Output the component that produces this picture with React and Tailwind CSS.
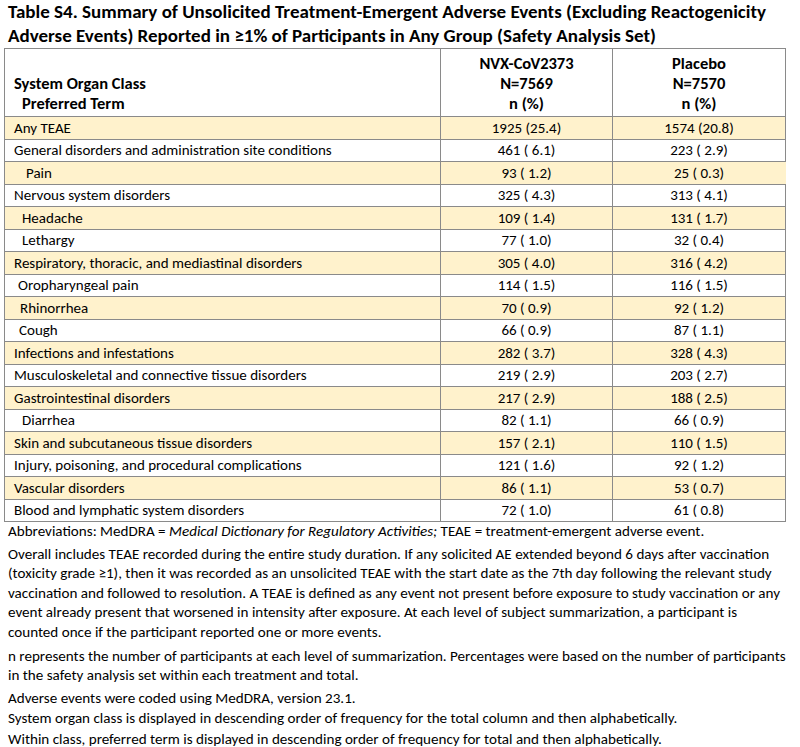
const rows = [
  { term: "Any TEAE", a: "1925 (25.4)", b: "1574 (20.8)", hl: true, pad: "pl-[9px]" },
  { term: "General disorders and administration site conditions", a: "461 ( 6.1)", b: "223 ( 2.9)", pad: "pl-[9px]" },
  { term: "Pain", a: "93 ( 1.2)", b: "25 ( 0.3)", hl: true, pad: "pl-[21px]", noRight: true },
  { term: "Nervous system disorders", a: "325 ( 4.3)", b: "313 ( 4.1)", pad: "pl-[9px]" },
  { term: "Headache", a: "109 ( 1.4)", b: "131 ( 1.7)", hl: true, pad: "pl-[17px]" },
  { term: "Lethargy", a: "77 ( 1.0)", b: "32 ( 0.4)", pad: "pl-[17px]" },
  { term: "Respiratory, thoracic, and mediastinal disorders", a: "305 ( 4.0)", b: "316 ( 4.2)", hl: true, pad: "pl-[9px]" },
  { term: "Oropharyngeal pain", a: "114 ( 1.5)", b: "116 ( 1.5)", pad: "pl-[13px]" },
  { term: "Rhinorrhea", a: "70 ( 0.9)", b: "92 ( 1.2)", hl: true, pad: "pl-[15px]" },
  { term: "Cough", a: "66 ( 0.9)", b: "87 ( 1.1)", pad: "pl-[14px]" },
  { term: "Infections and infestations", a: "282 ( 3.7)", b: "328 ( 4.3)", hl: true, pad: "pl-[9px]" },
  { term: "Musculoskeletal and connective tissue disorders", a: "219 ( 2.9)", b: "203 ( 2.7)", pad: "pl-[9px]" },
  { term: "Gastrointestinal disorders", a: "217 ( 2.9)", b: "188 ( 2.5)", hl: true, pad: "pl-[9px]" },
  { term: "Diarrhea", a: "82 ( 1.1)", b: "66 ( 0.9)", pad: "pl-[17px]" },
  { term: "Skin and subcutaneous tissue disorders", a: "157 ( 2.1)", b: "110 ( 1.5)", hl: true, pad: "pl-[9px]" },
  { term: "Injury, poisoning, and procedural complications", a: "121 ( 1.6)", b: "92 ( 1.2)", pad: "pl-[9px]" },
  { term: "Vascular disorders", a: "86 ( 1.1)", b: "53 ( 0.7)", hl: true, pad: "pl-[9px]" },
  { term: "Blood and lymphatic system disorders", a: "72 ( 1.0)", b: "61 ( 0.8)", pad: "pl-[9px]" },
];

export default function App() {
  return (
    <div className="w-[800px] h-[747px] bg-white text-black overflow-hidden font-['Carlito','Liberation_Sans',sans-serif]">
      {/* Title */}
      <div className="px-[8px] font-bold text-[19px] leading-[24px] whitespace-nowrap">
        <div>Table S4. Summary of Unsolicited Treatment-Emergent Adverse Events (Excluding Reactogenicity</div>
        <div>Adverse Events) Reported in ≥1% of Participants in Any Group (Safety Analysis Set)</div>
      </div>

      {/* Table */}
      <table className="ml-[4px] border-collapse text-[15px] w-[781px] table-fixed">
        <colgroup>
          <col className="w-[436px]" />
          <col className="w-[172px]" />
          <col className="w-[173px]" />
        </colgroup>
        <thead>
          <tr className="font-bold h-[68px] leading-[20px] text-[16.5px]">
            <th className="border border-[#8a8a8a] text-left align-bottom pl-[9px] pb-[3px] font-bold">
              <div>System Organ Class</div>
              <div className="pl-[8px]">Preferred Term</div>
            </th>
            <th className="border border-[#8a8a8a] text-center align-bottom pb-[3px] font-bold">
              <div>NVX-CoV2373</div>
              <div>N=7569</div>
              <div>n (%)</div>
            </th>
            <th className="border border-[#8a8a8a] text-center align-bottom pb-[3px] font-bold">
              <div>Placebo</div>
              <div>N=7570</div>
              <div>n (%)</div>
            </th>
          </tr>
        </thead>
        <tbody>
          {rows.map((r) => (
            <tr key={r.term} className={`h-[22.5px] leading-[20px] ${r.hl ? "bg-[#fff2cc]" : "bg-white"}`}>
              <td className={`border border-[#8a8a8a] ${r.pad} whitespace-nowrap`}>{r.term}</td>
              <td className="border border-[#8a8a8a] text-center whitespace-pre">{r.a}</td>
              <td className={`border border-[#8a8a8a] text-center whitespace-pre ${r.noRight ? "border-r-[#fff2cc]" : ""}`}>{r.b}</td>
            </tr>
          ))}
        </tbody>
      </table>

      {/* Notes */}
      <div className="px-[8px] text-[15.1px] leading-[19.6px] whitespace-nowrap">
        <p className="mb-[3px]">
          Abbreviations: MedDRA = <i>Medical Dictionary for Regulatory Activities;</i> TEAE = treatment-emergent adverse event.
        </p>
        <p className="mb-[4px]">
          Overall includes TEAE recorded during the entire study duration. If any solicited AE extended beyond 6 days after vaccination
          <br />
          (toxicity grade ≥1), then it was recorded as an unsolicited TEAE with the start date as the 7th day following the relevant study
          <br />
          vaccination and followed to resolution. A TEAE is defined as any event not present before exposure to study vaccination or any
          <br />
          event already present that worsened in intensity after exposure. At each level of subject summarization, a participant is
          <br />
          counted once if the participant reported one or more events.
        </p>
        <p className="mb-[3px]">
          n represents the number of participants at each level of summarization. Percentages were based on the number of participants
          <br />
          in the safety analysis set within each treatment and total.
        </p>
        <p className="mb-[1px]">Adverse events were coded using MedDRA, version 23.1.</p>
        <p className="mb-[1px]">System organ class is displayed in descending order of frequency for the total column and then alphabetically.</p>
        <p>Within class, preferred term is displayed in descending order of frequency for total and then alphabetically.</p>
      </div>
    </div>
  );
}
